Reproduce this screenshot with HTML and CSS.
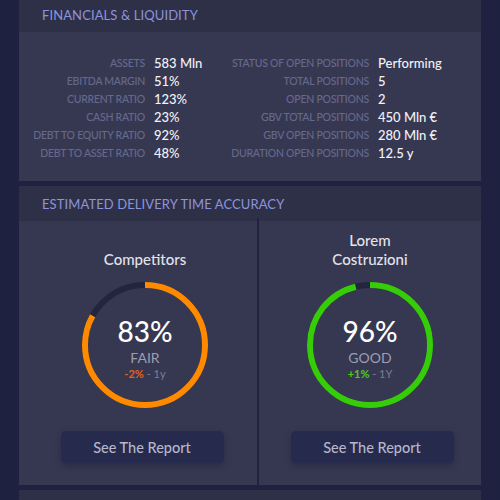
FILE: index.html
```html
<!DOCTYPE html>
<html>
<head>
<meta charset="utf-8">
<link rel="stylesheet" href="styles.css">
</head>
<body>
<main class="page">
  <section class="card">
    <header class="card-head">Financials &amp; Liquidity</header>
    <div class="card-body fin">
      <dl class="kv kv-left">
        <dt>Assets</dt><dd>583 Mln</dd>
        <dt>EBITDA Margin</dt><dd>51%</dd>
        <dt>Current Ratio</dt><dd>123%</dd>
        <dt>Cash Ratio</dt><dd>23%</dd>
        <dt>Debt to Equity Ratio</dt><dd>92%</dd>
        <dt>Debt to Asset Ratio</dt><dd>48%</dd>
      </dl>
      <dl class="kv kv-right">
        <dt>Status of Open Positions</dt><dd>Performing</dd>
        <dt>Total Positions</dt><dd>5</dd>
        <dt>Open Positions</dt><dd>2</dd>
        <dt>GBV Total Positions</dt><dd>450 Mln €</dd>
        <dt>GBV Open Positions</dt><dd>280 Mln €</dd>
        <dt>Duration Open Positions</dt><dd>12.5 y</dd>
      </dl>
    </div>
  </section>

  <section class="card">
    <header class="card-head">Estimated Delivery Time Accuracy</header>
    <div class="card-body acc">
      <div class="panel">
        <h3 class="panel-title">Competitors</h3>
        <div class="ring">
          <svg class="ring-svg" width="126" height="126" viewBox="0 0 126 126">
            <circle class="track" cx="63" cy="63" r="60"></circle>
            <circle class="arc arc-orange" cx="63" cy="63" r="60" stroke-dasharray="312.9 377"></circle>
          </svg>
          <div class="ring-text">
            <div class="pct">83%</div>
            <div class="grade">FAIR</div>
            <div class="delta"><span class="neg">-2%</span> - 1y</div>
          </div>
        </div>
        <button class="btn">See The Report</button>
      </div>
      <div class="panel panel-right">
        <h3 class="panel-title">Lorem<br>Costruzioni</h3>
        <div class="ring">
          <svg class="ring-svg" width="126" height="126" viewBox="0 0 126 126">
            <circle class="track" cx="63" cy="63" r="60"></circle>
            <circle class="arc arc-green" cx="63" cy="63" r="60" stroke-dasharray="361.9 377"></circle>
          </svg>
          <div class="ring-text">
            <div class="pct">96%</div>
            <div class="grade">GOOD</div>
            <div class="delta"><span class="pos">+1%</span> - 1Y</div>
          </div>
        </div>
        <button class="btn">See The Report</button>
      </div>
    </div>
  </section>

  <section class="card">
    <header class="card-head"></header>
  </section>
</main>
</body>
</html>
```

FILE: styles.css
```css
html, body {
  margin: 0;
  padding: 0;
  background: #1e2140;
  font-family: Lato, "Open Sans", "DejaVu Sans", sans-serif;
}

.page {
  margin-top: -3px;
  padding: 0 19px;
  display: flex;
  flex-direction: column;
  gap: 5px;
}

.card {
  background: #363852;
}

.card-head {
  background: #2e3047;
  height: 35px;
  box-sizing: border-box;
  padding: 0 23px;
  display: flex;
  align-items: center;
  color: #8c94de;
  font-size: 13px;
  text-transform: uppercase;
  letter-spacing: 0.1px;
}

/* Financials */
.fin {
  display: flex;
  gap: 9px;
  padding: 22px 16px 19px;
}

.kv {
  margin: 0;
  display: grid;
  column-gap: 9px;
  grid-auto-rows: 18px;
  align-items: center;
}

.kv-left {
  grid-template-columns: 110px 68px;
}

.kv-right {
  grid-template-columns: 138px auto;
}

.kv dt {
  justify-self: end;
  text-align: right;
  text-transform: uppercase;
  color: #66698c;
  font-size: 10.5px;
  font-weight: 500;
  letter-spacing: -0.25px;
  white-space: nowrap;
}

.kv dd {
  margin: 0;
  color: #f2f2f6;
  font-size: 13px;
  font-weight: 500;
  white-space: nowrap;
}

/* Accuracy */
.acc {
  display: grid;
  grid-template-columns: 1fr 1fr;
  padding-left: 14px;
  height: 264px;
  box-sizing: border-box;
}

.panel {
  display: flex;
  flex-direction: column;
  align-items: center;
  padding-top: 10px;
}

.panel-right {
  border-left: 2px solid #1f2240;
  margin-top: -3px;
  padding-top: 13px;
}

.panel-title {
  margin: 0;
  height: 38px;
  display: flex;
  align-items: flex-end;
  text-align: center;
  color: #e3e3ea;
  font-size: 15px;
  font-weight: 500;
  line-height: 19px;
}

.ring {
  margin-top: 13px;
  display: grid;
  width: 126px;
  height: 126px;
}

.ring-svg,
.ring-text {
  grid-area: 1 / 1;
}

.ring-svg {
  transform: rotate(-90deg);
}

.track {
  fill: none;
  stroke: #22253f;
  stroke-width: 6;
}

.arc {
  fill: none;
  stroke-width: 6;
}

.arc-orange { stroke: #ff8a00; }
.arc-green { stroke: #36cc08; }

.ring-text {
  padding-top: 33px;
  text-align: center;
}

.pct {
  color: #ffffff;
  font-size: 28px;
  font-weight: 500;
  line-height: 32px;
}

.grade {
  margin-top: 2px;
  color: #9d9db2;
  font-size: 14px;
  line-height: 18px;
}

.delta {
  color: #7c7d95;
  font-size: 11px;
  line-height: 14px;
}

.neg { color: #e2621c; font-weight: 700; }
.pos { color: #4fcc16; font-weight: 700; }

.btn {
  margin-top: 23px;
  margin-left: -6px;
  width: 163px;
  height: 32px;
  border: none;
  border-radius: 5px;
  background: #262b4d;
  color: #b6b7ca;
  font-family: inherit;
  font-size: 14.5px;
  font-weight: 500;
  box-shadow: 0 3px 6px rgba(20, 22, 45, 0.35);
}

.panel-right .btn {
  margin-left: 4px;
}
```
